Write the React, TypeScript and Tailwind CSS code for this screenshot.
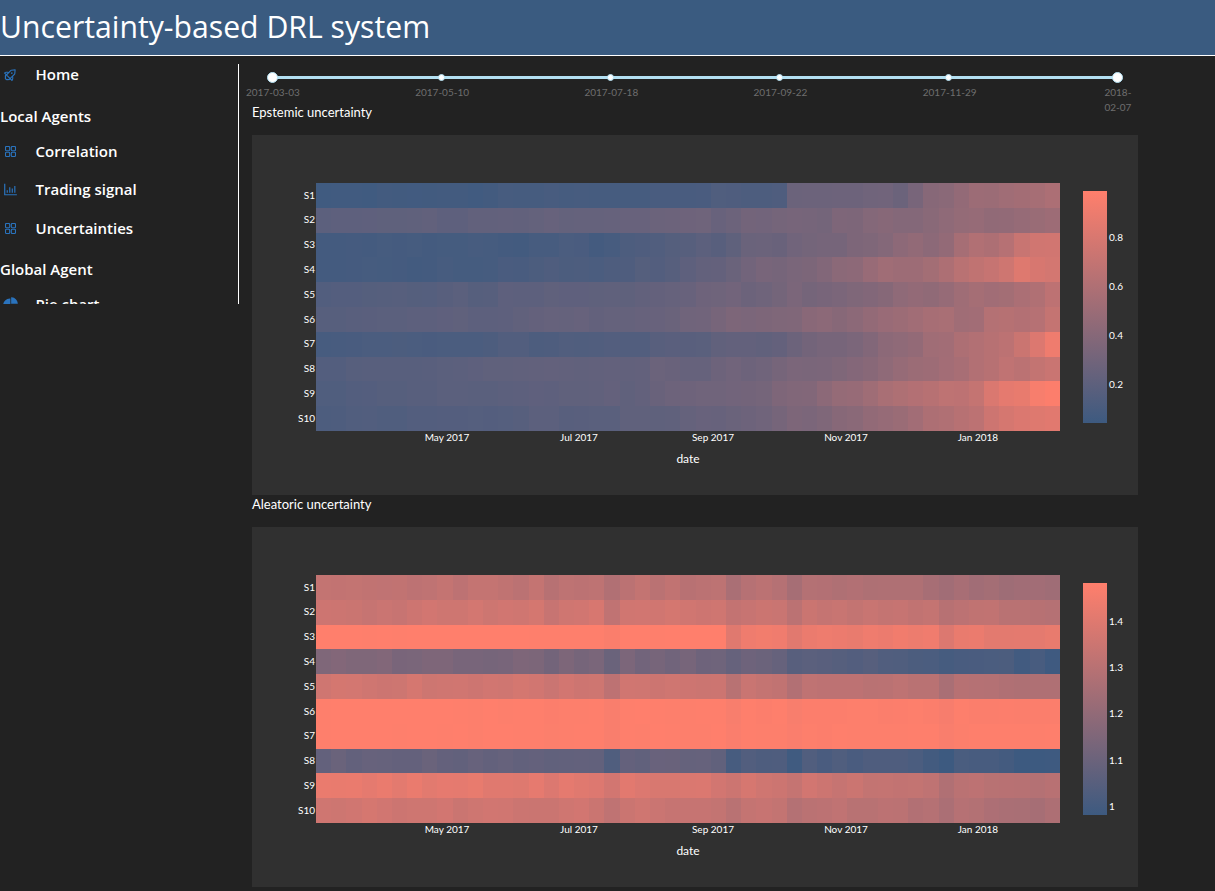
import { AiOutlineRocket, AiOutlineBarChart, AiFillPieChart } from "react-icons/ai";

const COLS = 49;
const LOW = [61, 90, 128];
const HIGH = [255, 127, 108];
const color = (t: number) => {
  const v = Math.max(0, Math.min(1, t));
  return `rgb(${LOW.map((c, i) => Math.round(c + (HIGH[i] - c) * v)).join(",")})`;
};
const hash = (a: number, b: number) => {
  const s = Math.sin(a * 127.1 + b * 311.7) * 43758.5453;
  return s - Math.floor(s);
};
const interp = (pts: number[][], c: number) => {
  for (let i = 1; i < pts.length; i++) {
    if (c <= pts[i][0]) {
      const [x0, y0] = pts[i - 1];
      const [x1, y1] = pts[i];
      return y0 + ((y1 - y0) * (c - x0)) / (x1 - x0);
    }
  }
  return pts[pts.length - 1][1];
};

const EPI: number[][][] = [
  [[0, 0.02], [20, 0.05], [30, 0.1], [31, 0.24], [38, 0.27], [40, 0.38], [48, 0.6]],
  [[0, 0.16], [20, 0.22], [30, 0.27], [40, 0.38], [48, 0.5]],
  [[0, 0.03], [20, 0.06], [30, 0.24], [40, 0.44], [48, 0.78]],
  [[0, 0.03], [20, 0.08], [30, 0.3], [40, 0.55], [46, 0.82], [48, 0.76]],
  [[0, 0.11], [20, 0.18], [30, 0.28], [40, 0.44], [48, 0.62]],
  [[0, 0.13], [20, 0.22], [30, 0.33], [40, 0.5], [48, 0.68]],
  [[0, 0.05], [20, 0.12], [30, 0.2], [40, 0.5], [46, 0.72], [48, 0.9]],
  [[0, 0.12], [20, 0.2], [30, 0.28], [40, 0.47], [48, 0.74]],
  [[0, 0.1], [20, 0.2], [30, 0.32], [37, 0.55], [43, 0.72], [48, 1]],
  [[0, 0.09], [20, 0.17], [30, 0.28], [37, 0.47], [48, 0.85]],
];
const ALE: number[][][] = [
  [[0, 0.68], [20, 0.67], [30, 0.63], [48, 0.5]],
  [[0, 0.72], [20, 0.78], [30, 0.72], [40, 0.7], [48, 0.62]],
  [[0, 1], [26, 1], [27, 0.92], [40, 0.9], [48, 0.86]],
  [[0, 0.34], [20, 0.3], [27, 0.27], [34, 0.14], [48, 0.03]],
  [[0, 0.76], [20, 0.76], [30, 0.7], [48, 0.58]],
  [[0, 1], [48, 0.98]],
  [[0, 1], [48, 0.99]],
  [[0, 0.22], [26, 0.2], [27, 0.1], [38, 0.07], [48, 0.01]],
  [[0, 0.88], [20, 0.84], [30, 0.76], [48, 0.62]],
  [[0, 0.76], [20, 0.74], [30, 0.68], [48, 0.56]],
];
const DIPS: Record<number, number> = { 15: 0.04, 19: 0.09, 27: 0.07, 31: 0.07, 41: 0.06 };

const epi = (r: number, c: number) => {
  const amp = 0.35 + c / 48;
  return interp(EPI[r], c) + ((hash(r + 1, Math.floor(c / 2)) - 0.5) * 0.05 + (hash(r + 9, c) - 0.5) * 0.025) * amp;
};
const ale = (r: number, c: number) => {
  const base = interp(ALE[r], c);
  const damp = base > 0.92 ? 0.3 : 1;
  return base + ((hash(r + 3, c) - 0.5) * 0.05 - (DIPS[c] ?? 0)) * damp;
};

const XT = [
  ["May 2017", 195],
  ["Jul 2017", 327],
  ["Sep 2017", 461],
  ["Nov 2017", 594],
  ["Jan 2018", 726],
] as const;

function Chart({ id, value, ticks }: { id: string; value: (r: number, c: number) => number; ticks: [string, number][] }) {
  const cw = 744 / COLS;
  const rows = Array.from({ length: 10 }, (_, i) => i);
  const cols = Array.from({ length: COLS }, (_, i) => i);
  return (
    <div className="w-[886px] h-[360px] bg-[#303030]">
      <svg width="886" height="360" className="block" style={{ fontFamily: "Lato, sans-serif" }}>
        <defs>
          <linearGradient id={id} x1="0" y1="0" x2="0" y2="1">
            <stop offset="0" stopColor={color(1)} />
            <stop offset="1" stopColor={color(0)} />
          </linearGradient>
        </defs>
        <g shapeRendering="crispEdges">
          {rows.map((r) =>
            cols.map((c) => (
              <rect
                key={`${r}-${c}`}
                x={64 + c * cw}
                y={48 + r * 24.8}
                width={c === COLS - 1 ? cw : cw + 0.5}
                height={r === 9 ? 24.8 : 25}
                fill={color(value(r, c))}
              />
            ))
          )}
          <rect x="831" y="56" width="24" height="232" fill={`url(#${id})`} />
        </g>
        <g fill="#ffffff" fontSize="10">
          {rows.map((r) => (
            <text key={r} x="63" y={48 + r * 24.8 + 15.5} textAnchor="end">{`S${r + 1}`}</text>
          ))}
          {XT.map(([t, x]) => (
            <text key={t} x={x} y="306" textAnchor="middle">{t}</text>
          ))}
          {ticks.map(([t, y]) => (
            <text key={t} x="857" y={y + 3.5}>{t}</text>
          ))}
          <text x="436" y="328" textAnchor="middle" fontSize="12">date</text>
        </g>
      </svg>
    </div>
  );
}

const AppGrid = () => (
  <svg width="11" height="11" viewBox="0 0 11 11" fill="none" stroke="currentColor" strokeWidth="1.1" className="ml-[3px]">
    <rect x="0.5" y="0.5" width="4.2" height="4.2" rx="0.9" />
    <rect x="6.3" y="0.5" width="4.2" height="4.2" rx="0.9" />
    <rect x="0.5" y="6.3" width="4.2" height="4.2" rx="0.9" />
    <rect x="6.3" y="6.3" width="4.2" height="4.2" rx="0.9" />
  </svg>
);

function NavItem({ icon, label, className }: { icon: React.ReactNode; label: string; className: string }) {
  return (
    <div className={`flex items-center h-[22px] ${className}`}>
      <span className="w-[35.5px] flex pl-[2px] text-[17px] text-[#2a73bd]">{icon}</span>
      <span className="text-[15px] font-semibold text-white leading-[22px]">{label}</span>
    </div>
  );
}

const Heading = ({ label, className }: { label: string; className: string }) => (
  <div className={`text-[15px] font-semibold text-white leading-[22px] h-[22px] ${className}`}>{label}</div>
);

const LABELS = ["2017-03-03", "2017-05-10", "2017-07-18", "2017-09-22", "2017-11-29"];

export default function App() {
  return (
    <div className="min-h-[891px] bg-[#222222]">
      <header className="h-[56px] bg-[#3a5b80] border-b border-white">
        <h1 className="text-[30.2px] leading-[54px] text-white" style={{ fontFamily: '"Open Sans", sans-serif' }}>
          Uncertainty-based DRL system
        </h1>
      </header>
      <div className="flex items-start">
        <nav
          className="w-[239px] shrink-0 h-[240px] mt-[8px] border-r border-white overflow-hidden"
          style={{ fontFamily: '"Open Sans", sans-serif' }}
        >
          <NavItem className="mt-[-1px]" icon={<AiOutlineRocket className="rotate-45" />} label="Home" />
          <Heading className="mt-[20px]" label="Local Agents" />
          <NavItem className="mt-[13px]" icon={<AppGrid />} label="Correlation" />
          <NavItem className="mt-[16px]" icon={<AiOutlineBarChart />} label="Trading signal" />
          <NavItem className="mt-[17px]" icon={<AppGrid />} label="Uncertainties" />
          <Heading className="mt-[19px]" label="Global Agent" />
          <NavItem className="mt-[13px]" icon={<AiFillPieChart />} label="Pie chart" />
        </nav>
        <main className="w-[899px] pl-[13px]" style={{ fontFamily: "Lato, sans-serif" }}>
          <div className="ml-[15px] w-[856px] mt-[16px] h-[10px] relative flex items-center justify-between">
            <div className="absolute left-[5px] right-[5px] top-[4px] h-[3px] bg-[#b3e0f2]" />
            {[0, 1, 2, 3, 4, 5].map((i) => (
              <div key={i} className="relative w-[10px] flex justify-center">
                {i === 0 || i === 5 ? (
                  <span className="block w-[11px] h-[11px] shrink-0 rounded-full bg-white border border-[#b3e0f2]" />
                ) : (
                  <span className="block w-[7px] h-[7px] rounded-full bg-white border border-[#b3e0f2]" />
                )}
              </div>
            ))}
          </div>
          <div className="flex justify-between w-[898px] -ml-[6px] mt-[3px] h-[19px] text-[10px] leading-[15px] text-[#6e6e6e] text-center">
            {LABELS.map((l) => (
              <span key={l} className="w-[52px] whitespace-nowrap">{l}</span>
            ))}
            <span className="w-[52px]">
              2018-
              <br />
              02-07
            </span>
          </div>
          <div className="text-[13px] leading-[17px] text-white mb-[14px]">Epstemic uncertainty</div>
          <Chart
            id="g1"
            value={epi}
            ticks={[["0.8", 102.5], ["0.6", 151.7], ["0.4", 200], ["0.2", 249]]}
          />
          <div className="text-[13px] leading-[17px] text-white mt-[1px] mb-[14px]">Aleatoric uncertainty</div>
          <Chart
            id="g2"
            value={ale}
            ticks={[["1.4", 94], ["1.3", 140], ["1.2", 186], ["1.1", 233], ["1", 279]]}
          />
        </main>
      </div>
    </div>
  );
}
